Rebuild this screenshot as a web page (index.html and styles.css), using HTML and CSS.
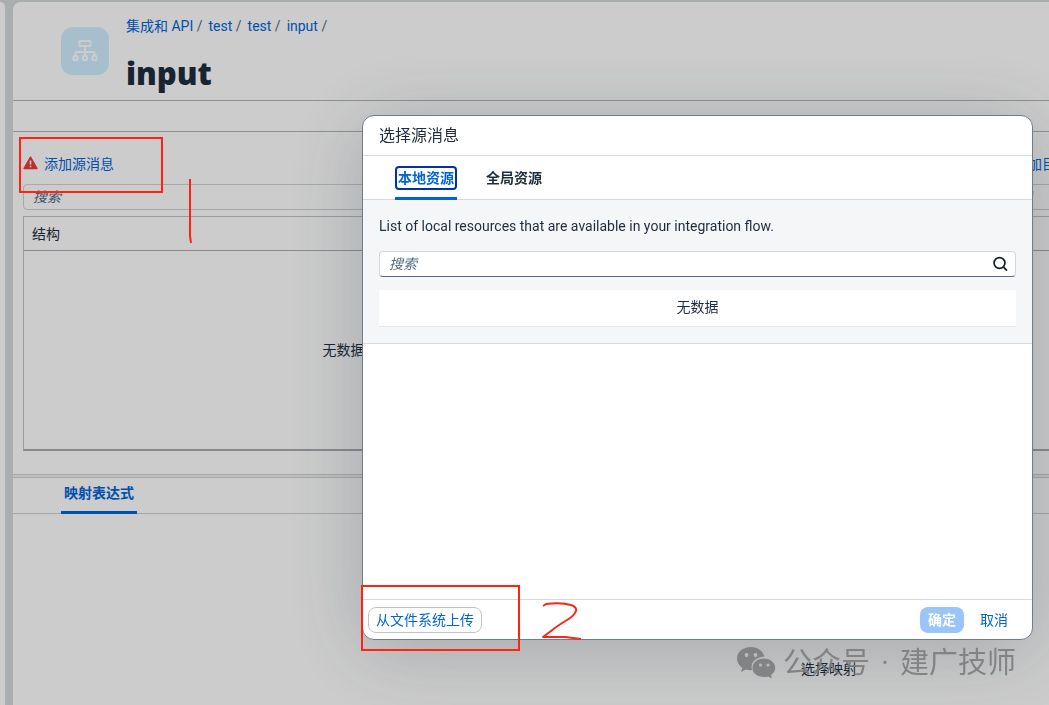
FILE: index.html
```html
<!DOCTYPE html>
<html lang="zh-CN">
<head>
<meta charset="UTF-8">
<meta name="viewport" content="width=device-width, initial-scale=1.0">
<title>input</title>
<link rel="stylesheet" href="styles.css">
</head>
<body>

<div class="shell">
  <div class="side-nav"></div>

  <main class="page">
    <header class="page-header">
      <div class="avatar">
        <svg width="26" height="22" viewBox="0 0 26 22" fill="none" stroke="#fff" stroke-width="2">
          <rect x="7.500" y="1" width="11" height="5" rx="0.5"/>
          <path d="M13 6v10M3.500 16v-2.500q0-1.500 1.500-1.500h16q1.500 0 1.500 1.500V16"/>
          <rect x="1.500" y="16" width="4" height="4" rx="0.5"/>
          <rect x="11" y="16" width="4" height="4" rx="0.5"/>
          <rect x="20.500" y="16" width="4" height="4" rx="0.5"/>
        </svg>
      </div>
      <div class="heading">
        <nav class="breadcrumbs">
          <span><a href="#">集成和 API</a> /</span>
          <span><a href="#">test</a> /</span>
          <span><a href="#">test</a> /</span>
          <span><a href="#">input</a> /</span>
        </nav>
        <h1>input</h1>
      </div>
    </header>

    <div class="toolbar"></div>

    <section class="mapper">
      <div class="panel">
        <div class="panel-title">
          <svg width="15" height="16" viewBox="0 0 15 16">
            <path d="M7.500 1L14 12.500H1z" fill="#ee3939" stroke="#ee3939" stroke-linejoin="round" stroke-width="1.400"/>
            <path d="M7.500 4.500v4M7.500 9.700v1.600" stroke="#fff" stroke-width="1.600"/>
          </svg>
          <a href="#">添加源消息</a>
        </div>
        <input class="panel-search" type="search" placeholder="搜索" aria-label="搜索">
        <table class="structure">
          <thead><tr><th>结构</th></tr></thead>
          <tbody><tr><td>无数据</td></tr></tbody>
        </table>
      </div>
      <div class="panel">
        <div class="panel-title">
          <a class="target-link" href="#">添加目标消息</a>
        </div>
        <input class="panel-search" type="search" placeholder="搜索" aria-label="搜索">
        <table class="structure">
          <thead><tr><th>结构</th></tr></thead>
          <tbody><tr><td>无数据</td></tr></tbody>
        </table>
      </div>
    </section>

    <div class="splitter"></div>

    <section class="expression">
      <div class="expression-tabs">
        <button class="tab selected">映射表达式</button>
      </div>
      <p class="expression-empty">选择映射</p>
    </section>
  </main>
</div>

<div class="overlay"></div>

<!-- Source message dialog -->
<div class="dialog" role="dialog" aria-labelledby="dialog-title">
  <h2 class="dialog-title" id="dialog-title">选择源消息</h2>
  <div class="dialog-tabs">
    <button class="tab selected focused"><span>本地资源</span></button>
    <button class="tab"><span>全局资源</span></button>
  </div>
  <div class="resources">
    <p>List of local resources that are available in your integration flow.</p>
    <div class="search-field">
      <input type="text" placeholder="搜索" aria-label="搜索">
      <svg width="16" height="16" viewBox="0 0 16 16" fill="none" stroke="#131e29" stroke-width="1.700" stroke-linecap="round">
        <circle cx="7.500" cy="7" r="5.400"/>
        <path d="M11.500 11.200L14.500 14.200"/>
      </svg>
    </div>
    <div class="no-data">无数据</div>
  </div>
  <div class="dialog-space"></div>
  <footer class="dialog-footer">
    <button class="btn btn-upload">从文件系统上传</button>
    <button class="btn btn-ok" disabled>确定</button>
    <button class="btn btn-cancel">取消</button>
  </footer>
</div>

<!-- Watermark -->
<div class="watermark">
  <svg width="40" height="34" viewBox="0 0 40 34">
    <path d="M15 1C7 1 1 6 1 12.500c0 4 2 7 5.200 9.200L5 26l5-2.500c2 .6 4 .8 6 .6C14 16 20 11 28.500 10.500C27 5 21.500 1 15 1z" fill="#7c7d7f"/>
    <path d="M28 12.500c-6.500 0-11.500 4-11.500 9.500S21.500 31 28 31c1.500 0 3-.2 4.200-.6L36 32.500l-1-3.500c2.600-1.700 4.200-4.200 4.200-7C39.200 16.500 34 12.500 28 12.500z" fill="#7c7d7f"/>
    <g fill="#b9babc"><circle cx="10.500" cy="9" r="1.900"/><circle cx="19.500" cy="9" r="1.900"/><circle cx="24.500" cy="19" r="1.600"/><circle cx="32" cy="19" r="1.600"/></g>
  </svg>
  <span>公众号<span class="dot">·</span>建广技师</span>
</div>

<!-- Step marks -->
<svg class="marks" width="600" height="660" viewBox="0 0 600 660" fill="none" stroke="#ff2412" stroke-width="2">
  <rect x="20" y="138" width="142" height="54"/>
  <path d="M190 179v57l1 7"/>
  <rect x="362" y="586" width="157" height="64"/>
  <path stroke-linejoin="round" d="M543 606l3-2q15-2 25 1q6 2 5 6q-2 5-9 9q-10 6-16 11l-8 6l22 0l16 2"/>
</svg>

</body>
</html>
```
FILE: styles.css
```css
* {
  box-sizing: border-box;
}

body {
  margin: 0;
  height: 100vh;
  overflow: hidden;
  background-color: #d4dade;
  color: #1d2d3e;
  font-family: Roboto, "Noto Sans CJK SC", sans-serif;
  font-size: 14px;
  line-height: 20px;
}

a {
  color: #0064d9;
  text-decoration: none;
}

button,
input {
  font: inherit;
}

h1,
h2,
p {
  margin: 0;
}

.shell {
  display: flex;
  gap: 8px;
  height: 100%;
  padding-top: 2px;
}

.side-nav {
  flex: 0 0 5px;
  background: #fff;
  border-radius: 0 8px 0 0;
}

/* Wide workspace, cut off at the window edge */
.page {
  flex: 1 0 1632px;
  background: #fff;
  border-radius: 8px 8px 0 0;
}

.page-header {
  display: flex;
  gap: 17px;
  height: 99px;
  padding: 14px 48px 0;
  border-bottom: 1px solid #b4b4b4;
}

.avatar {
  display: flex;
  align-items: center;
  justify-content: center;
  width: 48px;
  height: 48px;
  margin-top: 11px;
  background: #d1efff;
  border-radius: 12px;
}

.breadcrumbs {
  display: flex;
  gap: 6px;
  color: #556b82;
}

h1 {
  margin-top: 17px;
  font-family: "Noto Sans", sans-serif;
  font-size: 31px;
  line-height: 40px;
  font-weight: 900;
}

.toolbar {
  height: 31px;
  border-bottom: 1px solid #b4b4b4;
}

/* Mapper */
.mapper {
  display: grid;
  grid-template-columns: 1fr 330px 1fr;
  padding: 22px 10px 23px;
}

.panel:last-child {
  grid-column: 3;
}

.panel-title {
  display: flex;
  align-items: center;
  gap: 6px;
  height: 20px;
  margin-bottom: 10px;
}

.target-link {
  margin-left: 20px;
}

.panel-search {
  display: block;
  width: 100%;
  height: 26px;
  padding: 0 9px;
  background: #fff;
  border: 1px solid #d0d3d8;
  border-radius: 4px;
}

input::placeholder {
  color: #556b82;
  font-style: italic;
  opacity: 1;
}

.structure {
  width: 100%;
  margin-top: 6px;
  border: 1px solid #c4c4c4;
  border-bottom: 2px solid #aaadb2;
  border-spacing: 0;
}

.structure th {
  height: 34px;
  padding: 0 8px;
  border-bottom: 1px solid #a4adb8;
  font-weight: normal;
  text-align: left;
}

.structure td {
  height: 198px;
  padding: 0;
  text-align: center;
}

.splitter {
  height: 4px;
  background: #f0f0f0;
  border: solid #d0d0d0;
  border-width: 1px 0;
}

.tab {
  padding: 0;
  border: 0;
  border-bottom: 3px solid transparent;
  background: none;
  color: #1d2d3e;
  font-weight: bold;
  cursor: pointer;
}

.tab.selected {
  color: #0064d9;
  border-bottom-color: #0064d9;
  border-radius: 2px 2px 0 0;
}

.expression-tabs {
  display: flex;
  height: 36px;
  padding-left: 48px;
  border-bottom: 1px solid #d0d0d0;
}

.expression-tabs .tab {
  height: 36px;
  padding: 0 3px 4px;
}

.expression-empty {
  padding-top: 145px;
  text-align: center;
}

.overlay {
  position: fixed;
  inset: 0;
  background: rgba(0, 0, 0, 0.2);
}

/* Dialog */
.dialog {
  position: fixed;
  top: 115px;
  right: 16px;
  width: 671px;
  max-width: 100%;
  overflow: hidden;
  background: #fff;
  border: 1px solid #6d7d8b;
  border-radius: 12px;
  box-shadow: 0 10px 80px rgba(34, 45, 60, 0.24);
}

.dialog-title {
  height: 40px;
  padding: 0 16px;
  border-bottom: 1px solid #d9d9d9;
  font-size: 16px;
  line-height: 39px;
  font-weight: normal;
}

.dialog-tabs {
  display: flex;
  gap: 26px;
  height: 44px;
  padding: 0 32px;
  border-bottom: 1px solid #d9d9d9;
}

.dialog-tabs .tab {
  height: 44px;
  padding-top: 3px;
}

.dialog-tabs .tab span {
  display: block;
  padding: 0 1px;
  border: 2px solid transparent;
  border-radius: 4px;
}

.dialog-tabs .tab.focused span {
  border-color: #0032a5;
}

.resources {
  padding: 16px 16px 16px;
  background: #f5f6f7;
  border-bottom: 1px solid #d9d9d9;
}

.search-field {
  display: flex;
  align-items: center;
  height: 26px;
  margin: 15px 0 13px;
  padding: 0 7px 0 9px;
  background: #fff;
  border: 1px solid #d3d7dc;
  border-bottom-color: #556b82;
  border-radius: 4px;
}

.search-field input {
  flex: 1;
  padding: 0;
  border: 0;
  outline: none;
  background: none;
}

.no-data {
  height: 37px;
  border-bottom: 1px solid #e5e5e5;
  background: #fff;
  line-height: 34px;
  text-align: center;
}

.dialog-space {
  height: 255px;
}

.dialog-footer {
  display: flex;
  align-items: center;
  height: 40px;
  padding: 0 16px 0 5px;
  border-top: 1px solid #d9d9d9;
}

.btn {
  height: 26px;
  padding: 0 7px;
  border: 1px solid transparent;
  border-radius: 8px;
  background: none;
  color: #0064d9;
  line-height: 22px;
}

.btn-upload {
  margin-right: auto;
  border-color: #bcc3ca;
}

.btn-ok {
  margin-right: 8px;
  background: #99c5fb;
  color: #fff;
  font-weight: bold;
}

/* Watermark and marks lie over the page */
.watermark {
  position: fixed;
  right: 33px;
  bottom: 22px;
  display: flex;
  align-items: center;
  gap: 7px;
  color: #7c7d7f;
  font-size: 29px;
  line-height: 40px;
  opacity: 0.9;
}

.watermark .dot {
  display: inline-block;
  width: 30px;
  text-align: center;
}

.marks {
  position: absolute;
  top: 0;
  left: 0;
  pointer-events: none;
}
```
